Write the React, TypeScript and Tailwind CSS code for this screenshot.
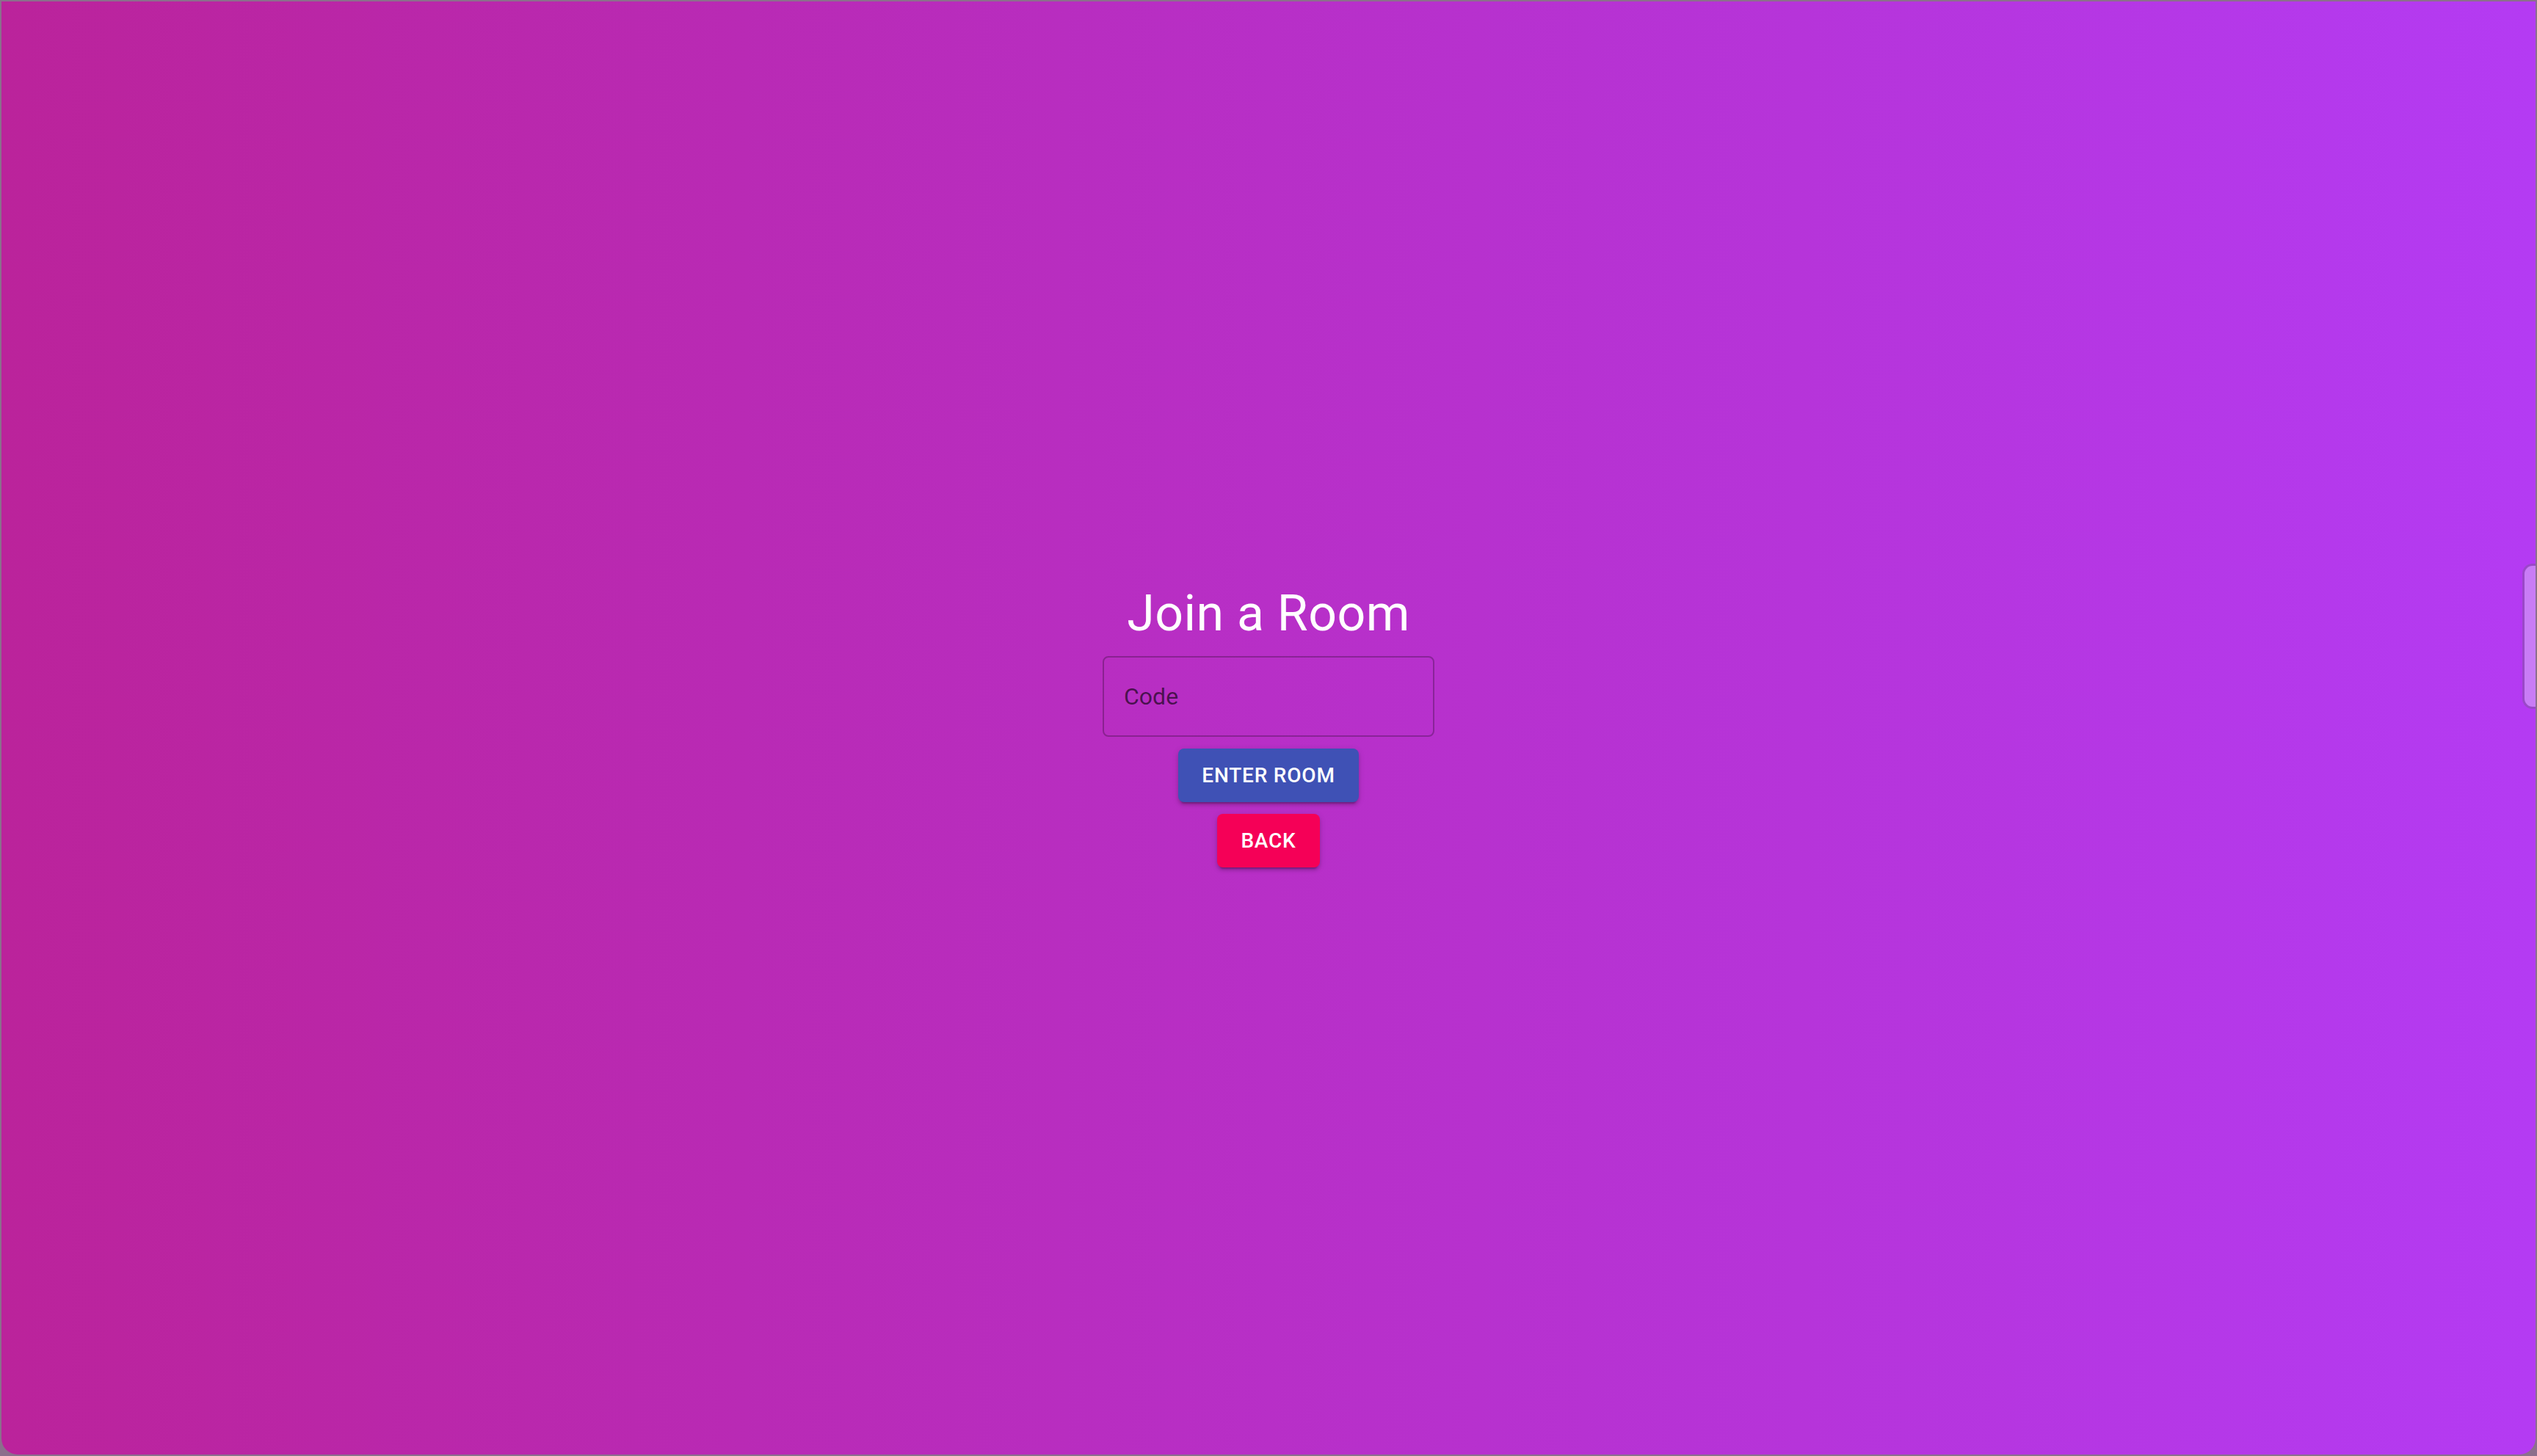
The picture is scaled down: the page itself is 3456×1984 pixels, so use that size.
import React from 'react';

const roboto = { fontFamily: 'Roboto, "Liberation Sans", sans-serif' };

export default function App() {
  return (
    <div className="h-screen w-full bg-[#8c6f8c] p-[2px]" style={roboto}>
      <div className="relative flex h-full w-full items-center justify-center overflow-hidden rounded-b-[22px] bg-[linear-gradient(to_right,#bb239b,#b43bf3)]">
        {/* Join form */}
        <div className="mb-[8px] flex flex-col items-center gap-[16px]">
          <h4 className="text-[68px] font-normal leading-[84px] tracking-[0.5px] text-white">
            Join a Room
          </h4>
          <div className="flex h-[110px] w-[452px] items-center rounded-[8px] border-2 border-black/25 px-[27px]">
            <span className="text-[32px] leading-none text-black/60">Code</span>
          </div>
          <button className="h-[73px] rounded-[8px] bg-[#3f51b5] px-[32px] text-[28px] font-medium uppercase tracking-[0.8px] text-white shadow-[0_6px_2px_-4px_rgba(0,0,0,0.2),0_4px_4px_0_rgba(0,0,0,0.14),0_2px_10px_0_rgba(0,0,0,0.12)]">
            Enter Room
          </button>
          <button className="h-[73px] rounded-[8px] bg-[#f50057] px-[32px] text-[28px] font-medium uppercase tracking-[0.8px] text-white shadow-[0_6px_2px_-4px_rgba(0,0,0,0.2),0_4px_4px_0_rgba(0,0,0,0.14),0_2px_10px_0_rgba(0,0,0,0.12)]">
            Back
          </button>
        </div>

        {/* side tab */}
        <div className="absolute right-0 top-[766px] h-[198px] w-[18px] rounded-l-[14px] border-[3px] border-r-0 border-[#9a48c8] bg-[#c97cf6]" />
      </div>
    </div>
  );
}
